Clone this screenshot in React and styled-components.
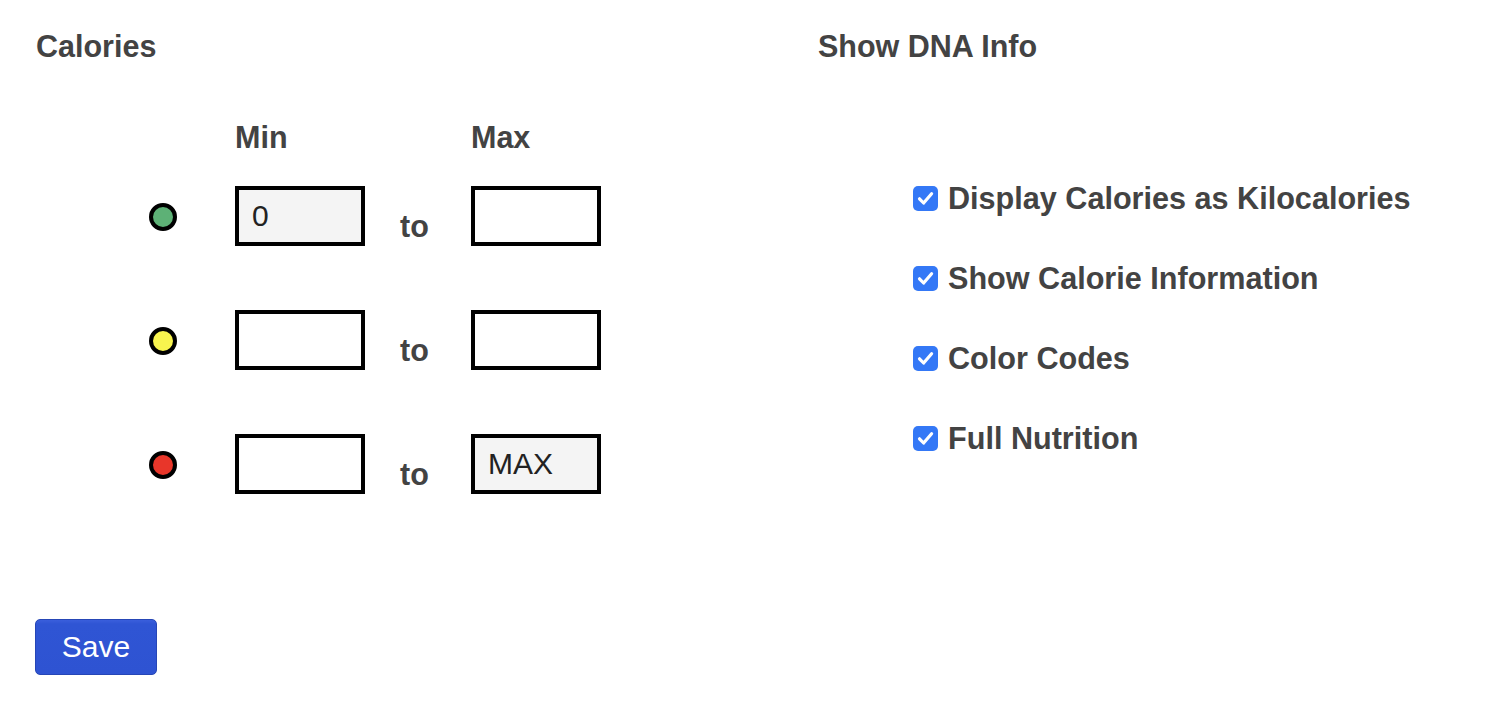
import styled, { createGlobalStyle } from 'styled-components';

const GlobalStyle = createGlobalStyle`
  body {
    margin: 0;
    background: #fff;
    font-family: 'Liberation Sans', Arial, Helvetica, sans-serif;
    color: #434343;
  }
`;

const columns = '86px 165px 71px 130px';

const dotColors = {
  green: '#5db176',
  yellow: '#f8f44e',
  red: '#e8362a',
};

const ranges = [
  { color: 'green', min: '0', max: '' },
  { color: 'yellow', min: '', max: '' },
  { color: 'red', min: '', max: 'MAX' },
];

const options = [
  'Display Calories as Kilocalories',
  'Show Calorie Information',
  'Color Codes',
  'Full Nutrition',
];

const App = () => {
  return (
    <Page>
      <GlobalStyle />
      <Columns>
        <Section>
          <Heading>Calories</Heading>
          <Table>
            <HeaderRow>
              <span />
              <ColLabel>Min</ColLabel>
              <span />
              <ColLabel>Max</ColLabel>
            </HeaderRow>
            {ranges.map(r => (
              <RangeRow key={r.color}>
                <Dot $color={dotColors[r.color]} />
                <RangeInput defaultValue={r.min} readOnly={!!r.min} $locked={!!r.min} />
                <To>to</To>
                <RangeInput defaultValue={r.max} readOnly={!!r.max} $locked={!!r.max} />
              </RangeRow>
            ))}
          </Table>
        </Section>
        <Section>
          <Heading>Show DNA Info</Heading>
          <OptionList>
            {options.map(text => (
              <Option key={text}>
                <CheckBox>
                  <svg width='25' height='25' viewBox='0 0 25 25'>
                    <path d='M6.5 12.8 L10.6 17 L18.6 7.8' fill='none' stroke='#fff' strokeWidth='3.2' strokeLinecap='round' strokeLinejoin='round' />
                  </svg>
                </CheckBox>
                <span>{text}</span>
              </Option>
            ))}
          </OptionList>
        </Section>
      </Columns>
      <SaveButton>Save</SaveButton>
    </Page>
  );
};

const Page = styled.div`
  padding: 29px 36px 0 36px;
`;

const Columns = styled.div`
  display: grid;
  grid-template-columns: 782px 1fr;
  align-items: start;
`;

const Section = styled.div`
  display: flex;
  flex-direction: column;
`;

const Heading = styled.h2`
  margin: 0;
  font-size: 30.5px;
  font-weight: bold;
  line-height: 34px;
  color: #434343;
`;

const Table = styled.div`
  display: flex;
  flex-direction: column;
  padding-left: 113px;
  margin-top: 57px;
`;

const HeaderRow = styled.div`
  display: grid;
  grid-template-columns: ${columns};
  height: 34px;
  margin-bottom: 32px;
`;

const ColLabel = styled.span`
  font-size: 30.5px;
  font-weight: bold;
  line-height: 34px;
`;

const RangeRow = styled.div`
  display: grid;
  grid-template-columns: ${columns};
  align-items: center;
  height: 60px;
  margin-bottom: 64px;
  &:last-child {
    margin-bottom: 0;
  }
`;

const Dot = styled.span`
  width: 28px;
  height: 28px;
  box-sizing: border-box;
  border-radius: 50%;
  border: 4px solid #000;
  background: ${p => p.$color};
  margin-top: 1px;
`;

const RangeInput = styled.input`
  box-sizing: border-box;
  width: 130px;
  height: 60px;
  border: 4px solid #000;
  border-radius: 0;
  padding: 0 0 0 13px;
  margin: 0;
  font-family: 'Liberation Sans', Arial, sans-serif;
  font-size: 30px;
  color: #222;
  background: ${p => (p.$locked ? '#f4f4f4' : '#fff')};
  outline: none;
`;

const To = styled.span`
  align-self: end;
  font-size: 30.5px;
  font-weight: bold;
  line-height: 34px;
  margin-bottom: 3px;
`;

const OptionList = styled.div`
  display: flex;
  flex-direction: column;
  gap: 46px;
  margin-top: 118px;
  padding-left: 95px;
`;

const Option = styled.label`
  display: flex;
  align-items: center;
  gap: 10px;
  font-size: 30.6px;
  font-weight: bold;
  line-height: 34px;
  color: #434343;
`;

const CheckBox = styled.span`
  display: flex;
  width: 25px;
  height: 25px;
  border-radius: 5px;
  background: #3478f6;
  flex-shrink: 0;
`;

const SaveButton = styled.button`
  display: flex;
  align-items: center;
  justify-content: center;
  margin-top: 125px;
  margin-left: -1px;
  width: 122px;
  height: 56px;
  padding: 0;
  border: 1px solid #2646b6;
  border-radius: 5px;
  background: linear-gradient(#3a5fdc 0, #2f55d4 4px, #2e53d2 100%);
  color: #fff;
  font-family: 'Liberation Sans', Arial, sans-serif;
  font-size: 30px;
  cursor: pointer;
`;

export default App;
